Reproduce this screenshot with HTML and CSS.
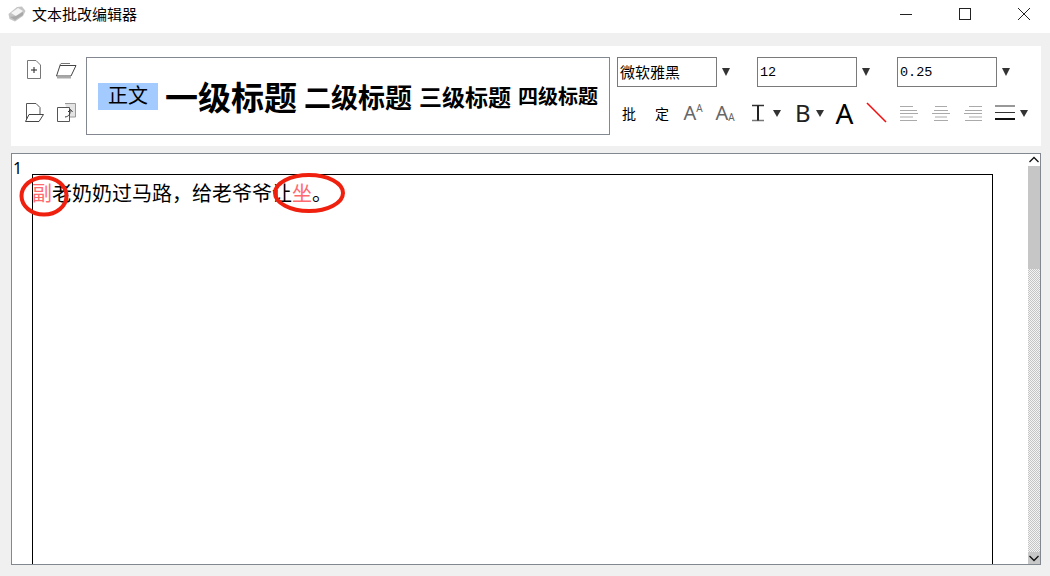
FILE: index.html
```html
<!DOCTYPE html>
<html lang="zh">
<head>
<meta charset="utf-8">
<title>文本批改编辑器</title>
<link rel="stylesheet" href="styles.css">
</head>
<body>
<header class="titlebar">
  <svg class="appicon" width="18" height="16" viewBox="0 0 18 16"><path d="M0.500 8 L9 1 L14 0.500 L17.500 5 L15 10 L7 15.500 L1.500 13Z" fill="#c4c4c4"/><path d="M3 7 L10 2 L15 5 L8 10Z" fill="#f4f4f4"/><path d="M2 11 L8 10 L15 6 L15 9 L7 14Z" fill="#a8a8a8"/></svg>
  <span class="apptitle">文本批改编辑器</span>
  <div class="winbtns">
    <svg class="winbtn" width="46" height="14" viewBox="0 0 46 14"><path d="M17 7.500H29" stroke="#222" fill="none"/></svg>
    <svg class="winbtn" width="46" height="14" viewBox="0 0 46 14"><rect x="17.500" y="1.500" width="11" height="11" stroke="#222" fill="none"/></svg>
    <svg class="winbtn" width="46" height="14" viewBox="0 0 46 14"><path d="M17 1L29 13M29 1L17 13" stroke="#222" fill="none"/></svg>
  </div>
</header>

<section class="toolbar">
  <div class="filebtns">
    <svg width="32" height="32" viewBox="0 0 32 32"><path d="M9.500 7.500H18L22.500 12V25.500H9.500Z" fill="#fff" stroke="#777"/><path d="M13 17H19M16 14V20" stroke="#222"/></svg>
    <svg width="32" height="32" viewBox="0 0 32 32"><path d="M6.500 23L10 12.500H26L21 23Z" fill="#fff" stroke="#444"/><path d="M7 24.500H21" stroke="#aaa" stroke-width="2"/><path d="M9.500 12.500L11 10.500H20" stroke="#777" fill="none"/></svg>
    <svg width="32" height="32" viewBox="0 0 32 32"><path d="M8.500 26V9.500H18L22 13.500V20" fill="none" stroke="#555"/><path d="M7.500 27.500L11 20.500H25.500L21 27.500Z" fill="#fff" stroke="#444"/></svg>
    <svg width="32" height="32" viewBox="0 0 32 32"><path d="M15 9.500H25.500V23H19" fill="#e4e4e4" stroke="#999"/><path d="M7.500 13.500H19.500V27.500H7.500Z" fill="#fff" stroke="#555"/><path d="M15 23C19 22.500 20.500 20 20 16M18 18L20.500 15.500L22.500 18" fill="none" stroke="#333"/></svg>
  </div>

  <div class="stylebox">
    <span class="style style-body">正文</span>
    <span class="style style-h1">一级标题</span>
    <span class="style style-h2">二级标题</span>
    <span class="style style-h3">三级标题</span>
    <span class="style style-h4">四级标题</span>
  </div>

  <div class="format">
    <div class="combos">
      <div class="combo-wrap"><div class="combo combo-font">微软雅黑</div><i class="tri"></i></div>
      <div class="combo-wrap"><div class="combo">12</div><i class="tri"></i></div>
      <div class="combo-wrap"><div class="combo">0.25</div><i class="tri"></i></div>
    </div>
    <div class="tools">
      <span class="tool tool-zi">批</span>
      <span class="tool tool-zi">定</span>
      <span class="tool tool-aa">A<sup>A</sup></span>
      <span class="tool tool-aa">A<sub>A</sub></span>
      <span class="tool tool-drop tool-i">
        <svg width="14" height="18" viewBox="0 0 14 18"><path d="M1 1.500H13" stroke="#333" stroke-width="1.500"/><path d="M1 16.500H13" stroke="#777" stroke-width="1.500"/><path d="M7 1.500V16.500" stroke="#222" stroke-width="2"/></svg>
        <i class="tri tri-small"></i>
      </span>
      <span class="tool tool-drop tool-b">B<i class="tri tri-small"></i></span>
      <span class="tool tool-a">A</span>
      <svg class="tool-slash" width="22" height="22" viewBox="0 0 22 22"><path d="M1 1L20 20" stroke="#f01010" stroke-width="1.600"/></svg>
      <svg class="tool-align" width="20" height="16" viewBox="0 0 20 16"><path d="M1 1.500H14M1 5.500H18M1 8.500H19M1 12H14M1 15.500H18" stroke="#aaa"/></svg>
      <svg class="tool-align" width="20" height="16" viewBox="0 0 20 16"><path d="M4 1.500H16M3 5.500H17M1 8.500H19M4 12H16M3 15.500H17" stroke="#aaa"/></svg>
      <svg class="tool-align" width="20" height="16" viewBox="0 0 20 16"><path d="M6 1.500H19M2 5.500H19M1 8.500H19M6 12H19M2 15.500H19" stroke="#aaa"/></svg>
      <span class="tool tool-drop tool-lines">
        <svg width="20" height="18" viewBox="0 0 20 18"><path d="M0 2H20M0 8.500H20" stroke="#333" stroke-width="1.200"/><path d="M0 15H20" stroke="#111" stroke-width="2"/></svg>
        <i class="tri tri-small"></i>
      </span>
    </div>
  </div>
</section>

<main class="editor">
  <div class="canvas">
    <div class="pagenum">1</div>
    <div class="page">
      <p class="line"><span class="mark">副</span>老奶奶过马路，给老爷爷让<span class="mark">坐</span>。</p>
    </div>
    <svg class="circle circle-a" width="50" height="42" viewBox="0 0 50 42"><ellipse cx="25" cy="21" rx="22.500" ry="18.500" fill="none" stroke="#f0200f" stroke-width="4"/></svg>
    <svg class="circle circle-b" width="74" height="42" viewBox="0 0 74 42"><ellipse cx="37" cy="21" rx="34" ry="18" fill="none" stroke="#f0200f" stroke-width="4"/></svg>
  </div>
  <div class="scrollbar">
    <svg class="sb-btn" width="12" height="12" viewBox="0 0 12 12"><path d="M1.500 8L6 3.500L10.500 8" fill="none" stroke="#111" stroke-width="1.300"/></svg>
    <div class="sb-thumb"></div>
    <div class="sb-track"></div>
    <svg class="sb-btn sb-btn-down" width="12" height="12" viewBox="0 0 12 12"><path d="M1.500 4L6 8.500L10.500 4" fill="none" stroke="#111" stroke-width="1.300"/></svg>
  </div>
</main>
</body>
</html>
```
FILE: styles.css
```css
* { box-sizing: border-box; }
html, body { margin: 0; height: 100%; }
body {
  width: 1050px;
  height: 576px;
  overflow: hidden;
  background: #f0f0f0;
  font-family: "Noto Sans CJK SC", "Noto Sans", sans-serif;
  color: #000;
  display: flex;
  flex-direction: column;
}
.titlebar {
  height: 33px;
  background: #fff;
  display: flex;
  align-items: center;
  padding-left: 8px;
  padding-bottom: 5px;
  flex: none;
}
.appicon { flex: none; }
.apptitle { font-size: 15px; margin-left: 6px; line-height: 20px; }
.winbtns { margin-left: auto; display: flex; padding-right: 3px; }
.winbtn { display: block; margin-left: 13px; }

.toolbar {
  margin: 13px 9px 0 11px;
  height: 100px;
  background: #fff;
  display: flex;
  flex: none;
  padding: 11px 0 11px 7px;
}
.filebtns {
  display: grid;
  grid-template-columns: 32px 32px;
  grid-template-rows: 41px 41px;
  width: 68px;
  margin-top: -4px;
}
.filebtns svg { display: block; }
.stylebox {
  width: 524px;
  height: 78px;
  border: 1px solid #828790;
  display: flex;
  align-items: center;
  padding-left: 11px;
  flex: none;
}
.style { font-weight: 700; white-space: nowrap; line-height: 1; }
.style-body {
  background: #a3cbff;
  font-weight: 400;
  font-size: 20px;
  width: 60px;
  height: 27px;
  line-height: 24px;
  text-align: center;
}
.style-h1 { font-size: 33px; margin-left: 7px; }
.style-h2 { font-size: 27px; margin-left: 7px; }
.style-h3 { font-size: 23px; margin-left: 7px; }
.style-h4 { font-size: 20px; margin-left: 7px; }

.format { margin-left: 7px; width: 424px; flex: none; }
.combos { display: flex; gap: 40px; }
.combo-wrap { position: relative; width: 100px; }
.combo {
  width: 100px;
  height: 30px;
  border: 1px solid #7a7a7a;
  font-size: 13.500px;
  line-height: 30px;
  padding-left: 2px;
  font-family: "Liberation Mono", "Noto Sans CJK SC", monospace;
}
.combo-font { font-family: "Noto Sans CJK SC", sans-serif; font-size: 15px; line-height: 28px; }
.tri {
  display: block;
  width: 0;
  height: 0;
  border-left: 4.500px solid transparent;
  border-right: 4.500px solid transparent;
  border-top: 8px solid #333;
}
.combo-wrap .tri { position: absolute; left: 105px; top: 11px; }
.tools { display: flex; align-items: center; height: 48px; margin-top: 2px; }
.tool { display: flex; align-items: center; justify-content: center; flex: none; line-height: 1; }
.tool-zi { font-size: 14px; width: 33px; padding-right: 9px; }
.tool-zi + .tool-zi { width: 24px; padding-right: 0; margin-right: 3px; }
.tool-aa {
  width: 32px;
  font-family: "Noto Sans", sans-serif;
  font-size: 20px;
  color: #666;
}
.tool-aa sup { font-size: 10px; line-height: 1; margin-bottom: 10px; vertical-align: baseline; }
.tool-aa sub { font-size: 10px; line-height: 1; margin-top: 8px; vertical-align: baseline; }
.tool-drop { gap: 6px; }
.tool-i { margin-left: 10px; gap: 8px; }
.tri-small { border-top-width: 7px; }
.tool-b {
  font-family: "Noto Sans", sans-serif;
  font-size: 24px;
  margin-left: 14px;
  gap: 5px;
  color: #222;
}
.tool-a { font-family: "Noto Sans", sans-serif; font-size: 28px; margin-left: 12px; }
.tool-slash { margin-left: 12px; flex: none; }
.tool-align { flex: none; margin-left: 12px; }
.tool-slash + .tool-align { margin-left: 11px; }
.tool-lines { margin-left: 12px; gap: 5px; }

.editor {
  margin: 7px 9px 0 11px;
  height: 412px;
  background: #fff;
  border: 1px solid #828790;
  display: flex;
  flex: none;
  overflow: hidden;
}
.canvas { flex: 1; position: relative; overflow: hidden; padding: 20px 0 0 20px; }
.pagenum { position: absolute; left: 1px; top: 4px; font-size: 16px; line-height: 20px; font-family: "Noto Sans", sans-serif; }
.page {
  width: 961px;
  height: 420px;
  border: 1px solid #000;
}
.line {
  margin: 6px 0 0 -1px;
  font-size: 20px;
  line-height: 24px;
  white-space: nowrap;
}
.mark { color: #ff6a6f; }
.circle { position: absolute; display: block; }
.circle-a { left: 7px; top: 21px; }
.circle-b { left: 260px; top: 18px; }
.scrollbar {
  width: 12px;
  flex: none;
  display: flex;
  flex-direction: column;
  background: #fff;
}
.sb-btn { display: block; flex: none; background: #fff; }
.sb-btn-down { background: #c8c8c8; }
.sb-thumb { height: 103px; background: #c6c6c6; flex: none; }
.sb-track {
  flex: 1;
  background-color: #e4e4e4;
  background-image: repeating-conic-gradient(#c4c4c4 0 25%, #f4f4f4 0 50%);
  background-size: 2px 2px;
}
```
